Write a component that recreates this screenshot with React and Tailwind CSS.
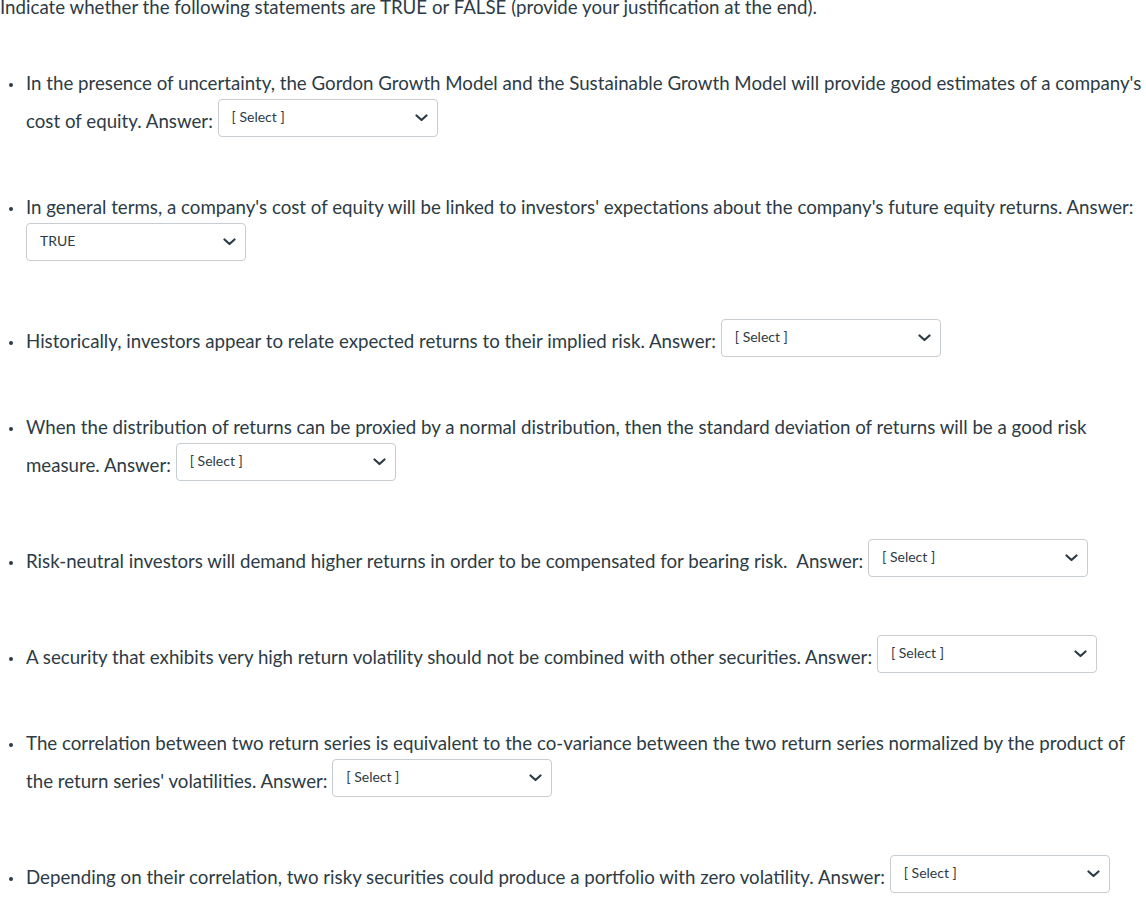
const items = [
  {
    text: "In the presence of uncertainty, the Gordon Growth Model and the Sustainable Growth Model will provide good estimates of a company's cost of equity. Answer:",
    value: "[ Select ]",
    mt: "mt-[43px]",
  },
  {
    text: "In general terms, a company's cost of equity will be linked to investors' expectations about the company's future equity returns. Answer:",
    value: "TRUE",
    mt: "mt-[48px]",
  },
  {
    text: "Historically, investors appear to relate expected returns to their implied risk. Answer:",
    value: "[ Select ]",
    mt: "mt-[58px]",
  },
  {
    text: "When the distribution of returns can be proxied by a normal distribution, then the standard deviation of returns will be a good risk measure. Answer:",
    value: "[ Select ]",
    mt: "mt-[48px]",
  },
  {
    text: "Risk-neutral investors will demand higher returns in order to be compensated for bearing risk.\u00a0 Answer:",
    value: "[ Select ]",
    mt: "mt-[58px]",
  },
  {
    text: "A security that exhibits very high return volatility should not be combined with other securities. Answer:",
    value: "[ Select ]",
    mt: "mt-[58px]",
  },
  {
    text: "The correlation between two return series is equivalent to the co-variance between the two return series normalized by the product of the return series' volatilities. Answer:",
    value: "[ Select ]",
    mt: "mt-[48px]",
  },
  {
    text: "Depending on their correlation, two risky securities could produce a portfolio with zero volatility. Answer:",
    value: "[ Select ]",
    mt: "mt-[58px]",
  },
];

// fake select box, like the quiz dropdowns
function SelectBox({ value }) {
  return (
    <span className="inline-flex w-[220px] h-[38px] -mt-[10px] items-center justify-between align-middle border border-[#c7cdd1] rounded-[4px] bg-white pl-[13px] pr-[9px] pb-[2px] leading-none">
      <span className="text-[14px] text-[#2d3b45]">{value}</span>
      <svg width="13" height="8" viewBox="0 0 13 8" fill="none" className="mt-[2px]">
        <polyline points="1.5,1.5 6.5,6 11.5,1.5" stroke="#2d3b45" strokeWidth="2.2" strokeLinecap="round" strokeLinejoin="round" />
      </svg>
    </span>
  );
}

export default function App() {
  return (
    <div className="bg-white min-h-screen w-[1146px] overflow-hidden font-['Lato','Noto_Sans',sans-serif] text-[#2d3b45] text-[18.7px]">
      <p className="-mt-[6px] leading-[27px]">
        Indicate whether the following statements are TRUE or FALSE (provide your justification at the end).
      </p>
      <ul>
        {items.map((item, idx) => (
          <li key={idx} className={`flex ${item.mt}`}>
            <div className="w-[26px] shrink-0 h-[38px] flex items-center pl-[9px]">
              <span className="block w-[4px] h-[4px] rounded-full bg-[#2d3b45] mt-[4px]" />
            </div>
            <p className="flex-1 leading-[38px]">
              {item.text} <SelectBox value={item.value} />
            </p>
          </li>
        ))}
      </ul>
    </div>
  );
}
